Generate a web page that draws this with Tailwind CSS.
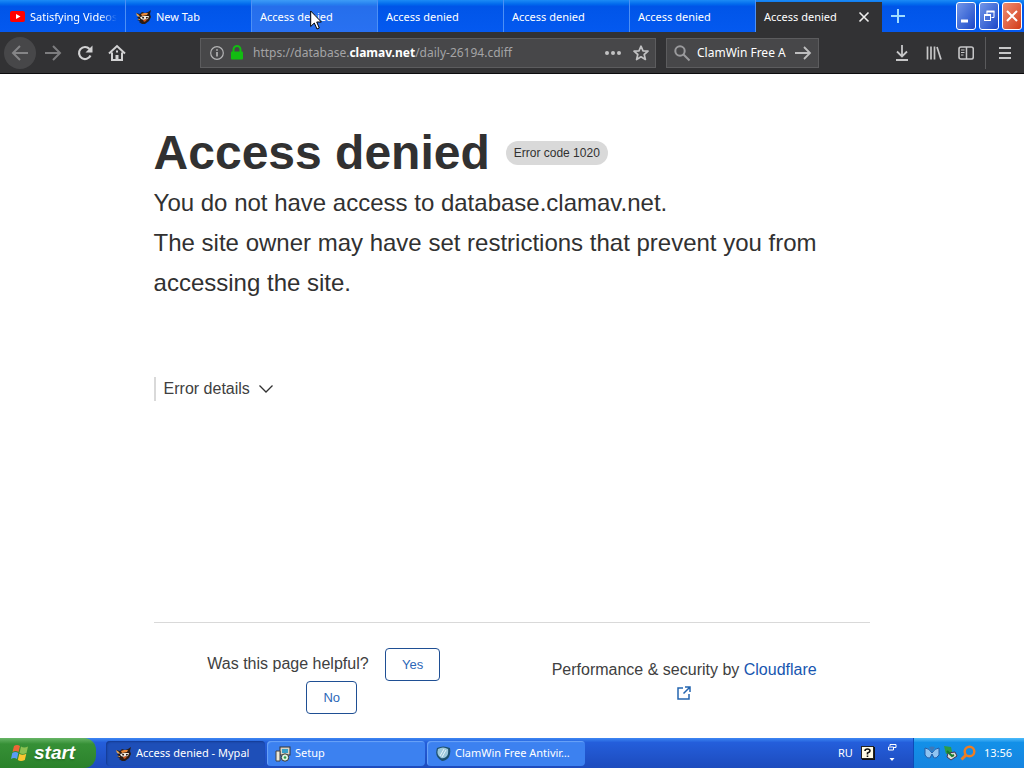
<!DOCTYPE html>
<html lang="en">
<head>
<meta charset="utf-8">
<meta name="viewport" content="width=device-width, initial-scale=1">
<title>Access denied - Mypal</title>
<script src="https://cdn.jsdelivr.net/npm/@tailwindcss/browser@4"></script>
</head>
<body class="flex h-screen flex-col overflow-hidden bg-white font-['Liberation_Sans',Arial,sans-serif] text-[#313131]">
<svg class="hidden">
  <symbol id="fox" viewBox="0 0 16 16">
    <path d="M0 4l4 1 2-2 3 1 3-1 3-2-1 4 1 3-2 4-4 3H6l-3-2 1-1-3-1 2-1-2-2 2 0z" fill="#2b1d16"/>
    <path d="M5 5l3-1 4 0-1 2-5 1z" fill="#e98a3a"/>
    <path d="M4 8l4-1 5 0-1 3-4 1-3-1z" fill="#efe9df"/>
    <path d="M6 8l2 0 0 1.500-1.500 0zM10 8h2l-.500 1.500h-1.500z" fill="#2b1d16"/>
    <path d="M7 11l4-1-1 2-2 1z" fill="#c9551d"/>
    <path d="M0 4l3 2 1 2-3-1zM1 10l3 0 0 1z" fill="#e5a556"/>
  </symbol>
</svg>

<!-- Tab strip -->
<header class="flex h-8 shrink-0 bg-linear-to-b from-[#1c8bf5] via-[#0055e8] via-20% to-[#0459f0] font-['Noto_Sans','Open_Sans',sans-serif] text-[11px] text-white">
  <nav class="grid min-w-0 flex-1 grid-cols-7" aria-label="Tabs">
    <a href="#" class="flex min-w-0 items-center gap-1 border-r border-[#4d90f5] pt-0.5 pr-2 pl-2.5">
      <svg class="h-4 w-4 shrink-0" viewBox="0 0 16 16"><rect y="2" width="15" height="11" rx="2" fill="#f00"/><path d="M6 5l4.500 2.500L6 10z" fill="#fff"/></svg>
      <span class="mask-r-from-80% whitespace-nowrap">Satisfying Videos</span>
    </a>
    <a href="#" class="flex items-center gap-1 border-r border-[#4d90f5] pt-0.5 pl-2.5"><svg class="h-4 w-4"><use href="#fox"/></svg>New Tab</a>
    <a href="#" class="flex items-center border-r border-[#4d90f5] bg-white/15 pt-0.5 pl-2">Access denied</a>
    <a href="#" class="flex items-center border-r border-[#4d90f5] pt-0.5 pl-2">Access denied</a>
    <a href="#" class="flex items-center border-r border-[#4d90f5] pt-0.5 pl-2">Access denied</a>
    <a href="#" class="flex items-center border-r border-[#4d90f5] pt-0.5 pl-2">Access denied</a>
    <div class="mt-0.5 flex items-center justify-between bg-[#323234] pr-3 pl-2">
      <a href="#" aria-current="page">Access denied</a>
      <button aria-label="Close tab"><svg class="h-3 w-3" viewBox="0 0 12 12" stroke="#eee" stroke-width="1.600"><path d="M1.500 1.500l9 9M10.500 1.500l-9 9"/></svg></button>
    </div>
  </nav>
  <div class="flex w-[142px] items-center pl-2">
    <button aria-label="New tab" class="mr-auto"><svg class="h-4 w-4" viewBox="0 0 16 16" stroke="#9fdcff" stroke-width="2"><path d="M8 1v14M1 8h14"/></svg></button>
    <div class="flex gap-[3px] pr-0.5">
      <button aria-label="Minimize" class="h-7 w-5 rounded-[3px] border border-white bg-linear-to-br from-[#7396e8] to-[#1c45c8]"><svg viewBox="0 0 18 26"><path d="M4 18h7" stroke="#fff" stroke-width="3"/></svg></button>
      <button aria-label="Restore" class="h-7 w-5 rounded-[3px] border border-white bg-linear-to-br from-[#7396e8] to-[#1c45c8]"><svg viewBox="0 0 18 26" fill="none" stroke="#fff"><path d="M7 11V8.500h7v6h-2.500"/><path d="M6.500 8.500h8" stroke-width="2"/><rect x="4.500" y="11.500" width="6" height="6"/><path d="M4 12h7" stroke-width="2"/></svg></button>
      <button aria-label="Close" class="h-7 w-5 rounded-[3px] border border-white bg-linear-to-br from-[#ee8b70] to-[#d23a12]"><svg viewBox="0 0 18 26" stroke="#fff" stroke-width="2"><path d="M4 8l10 10M14 8L4 18"/></svg></button>
    </div>
  </div>
</header>

<!-- Navigation toolbar -->
<div class="flex h-[42px] shrink-0 items-center border-b border-[#0c0c0d] bg-[#323234] pr-[11px] pl-1 font-['Noto_Sans','Open_Sans',sans-serif] text-[12px] text-white">
  <button aria-label="Back" class="flex h-8 w-8 items-center justify-center rounded-full bg-[#474749]"><svg class="h-[18px] w-[18px]" viewBox="0 0 18 18" fill="none" stroke="#858587" stroke-width="2"><path d="M17 9H2M9 2L2 9l7 7"/></svg></button>
  <button aria-label="Forward" class="ml-2"><svg class="h-[18px] w-[18px]" viewBox="0 0 18 18" fill="none" stroke="#7d7d7f" stroke-width="2"><path d="M1 9h15M9 2l7 7-7 7"/></svg></button>
  <button aria-label="Reload" class="ml-3.5"><svg class="h-[18px] w-[18px]" viewBox="0 0 18 18" fill="none" stroke="#d2d2d3" stroke-width="2.200"><path d="M14.500 11.500A6 6 0 1 1 13.500 5"/><path d="M16.500 1.500v7h-7z" fill="#d2d2d3" stroke="none"/></svg></button>
  <button aria-label="Home" class="ml-3.5"><svg class="h-[18px] w-[18px]" viewBox="0 0 18 18" fill="none" stroke="#d2d2d3" stroke-width="2"><path d="M1 9.500L9 2l8 7.500M4 8.500V16h10V8.500"/><path d="M9 16v-5" stroke-width="3"/><path d="M8 7.500h2"/></svg></button>
  <div class="ml-[74px] flex h-[30px] min-w-0 flex-1 items-center border border-[#5c5c5e] bg-[#474749] pr-1.5 pl-[9px]">
    <svg class="h-3.5 w-3.5 shrink-0" viewBox="0 0 14 14" fill="none" stroke="#b4b4b5"><circle cx="7" cy="7" r="6.300" stroke-width="1.200"/><path d="M7 6v4.500M7 3.200v1.600" stroke-width="1.700"/></svg>
    <svg class="ml-1.5 h-[15px] w-3.5 shrink-0" viewBox="0 0 14 15"><path d="M3.500 7V4.500a3.500 3.500 0 0 1 7 0V7" fill="none" stroke="#12bc12" stroke-width="2"/><rect x="1" y="6.500" width="12" height="8" rx="1" fill="#12bc12"/></svg>
    <div class="ml-[9px] min-w-0 flex-1 whitespace-nowrap text-[#a4a4a6]" role="textbox" aria-label="Address">https://database.<b class="font-bold text-white">clamav.net</b>/daily-26194.cdiff</div>
    <button aria-label="Page actions"><svg class="h-4 w-4" viewBox="0 0 16 16" fill="#c2c2c3"><circle cx="2" cy="8" r="2"/><circle cx="8" cy="8" r="2"/><circle cx="14" cy="8" r="2"/></svg></button>
    <button aria-label="Bookmark" class="ml-3"><svg class="h-4 w-4" viewBox="0 0 16 16" fill="none" stroke="#c2c2c3" stroke-width="1.700" stroke-linejoin="round"><path d="M8 1.200l2 4.600 5 .4-3.800 3.300 1.200 5L8 11.800l-4.400 2.700 1.200-5L1 6.200l5-.4z"/></svg></button>
  </div>
  <form class="ml-2.5 flex h-[30px] w-[153px] items-center border border-[#5c5c5e] bg-[#474749] px-1.5">
    <svg class="h-[18px] w-[18px] shrink-0" viewBox="0 0 18 18" fill="none" stroke="#9b9b9d" stroke-width="2"><circle cx="7" cy="7" r="4.700"/><path d="M10.500 10.500l6 6"/></svg>
    <input aria-label="Search" value="ClamWin Free A" class="ml-1.5 w-0 flex-1 bg-transparent outline-none">
    <button aria-label="Go" class="ml-1.5"><svg class="h-[18px] w-[18px]" viewBox="0 0 18 18" fill="none" stroke="#bebebf" stroke-width="1.800"><path d="M1 9h15M10 3l6 6-6 6"/></svg></button>
  </form>
  <div class="ml-[75px] flex items-center gap-4">
    <button aria-label="Downloads"><svg class="h-4 w-4" viewBox="0 0 16 16" fill="none" stroke="#c6c6c7" stroke-width="1.800"><path d="M8 0v11M3 6.500l5 5 5-5M2 15h12"/></svg></button>
    <button aria-label="Library"><svg class="h-4 w-4" viewBox="0 0 16 16" stroke="#c6c6c7" stroke-width="1.700"><path d="M1.500 1.500v13M5 1.500v13M8.500 1.500v13M11 2l4 12.500"/></svg></button>
    <button aria-label="Sidebar"><svg class="h-4 w-4" viewBox="0 0 16 16" fill="none" stroke="#c6c6c7"><rect x="1" y="2" width="14.300" height="12" rx="2" stroke-width="1.600"/><path d="M8.500 2v12" stroke-width="1.500"/><path d="M3 5h3.500M3 7.500h3.500M3 10h2.500"/></svg></button>
  </div>
  <div class="mr-[11px] ml-[11px] h-8 w-px bg-[#5a5a5c]"></div>
  <button aria-label="Menu"><svg class="h-4 w-4" viewBox="0 0 16 16" stroke="#c6c6c7" stroke-width="1.800"><path d="M2 3h12M2 8h12M2 13h12"/></svg></button>
</div>

<!-- Error page -->
<main class="mx-auto flex w-[70%] min-h-0 flex-1 flex-col pt-[50px]">
  <div class="flex items-center gap-4">
    <h1 class="text-[48px] leading-[58px] font-bold">Access denied</h1>
    <span class="rounded-full bg-[#d9d9d9] px-2 text-[12px] leading-6">Error code 1020</span>
  </div>
  <p class="mt-px text-[24px] leading-10">You do not have access to database.clamav.net.</p>
  <p class="text-[24px] leading-10">The site owner may have set restrictions that prevent you from accessing the site.</p>
  <button class="mt-[74px] flex h-6 items-center gap-2 self-start border-l-2 border-[#d9d9d9] pl-2 text-[16px] text-[#404040]">Error details
    <svg class="h-4 w-4" viewBox="0 0 16 16" fill="none" stroke="#313131" stroke-width="1.300"><path d="M1.500 4.500L8 11l6.500-6.500"/></svg>
  </button>
  <footer class="mt-auto mb-6 flex border-t border-[#d9d9d9] pt-[25px] pr-3 text-center text-[16px] text-[#404040]">
    <div class="w-1/2 pr-12 pl-9">Was this page helpful?
      <button class="ml-3 h-[33px] rounded border border-[#1f4f94] px-4 text-[13px] text-[#2c67b8]">Yes</button>
      <button class="ml-4 h-[33px] rounded border border-[#1f4f94] px-4 text-[13px] text-[#2c67b8]">No</button>
    </div>
    <div class="w-1/2 pt-2.5 pr-9 pl-10 leading-6">Performance &amp; security by <a href="#" class="text-[#1756b0]">Cloudflare
      <svg class="inline h-4 w-4 align-text-bottom" viewBox="0 0 16 16" fill="none" stroke="#2465b0" stroke-width="1.500"><path d="M7 2H2v11h11V8M9 1h5v5M14 1L7.500 7.500"/></svg></a>
    </div>
  </footer>
</main>

<!-- Taskbar -->
<div class="flex h-[30px] shrink-0 items-stretch bg-linear-to-b from-[#3d86f3] via-[#245edb] via-15% to-[#1d4bbd] font-['Noto_Sans','Open_Sans',sans-serif] text-[11px] text-white">
  <button class="mr-2.5 flex w-24 items-center gap-1 rounded-r-xl bg-linear-to-b from-[#66b566] via-[#369036] via-20% to-[#2b822b] pl-2.5 font-['Liberation_Sans',Arial,sans-serif] text-[19px] font-bold italic text-shadow-sm">
    <svg class="h-[18px] w-5" viewBox="0 0 20 18"><path d="M4 2q3-2 6 0L8.500 8q-3-2-6 0z" fill="#ee6637"/><path d="M11 2.500q3 2 7 0L16.500 9q-4 2-7 0z" fill="#8cc152"/><path d="M2.300 9q3-2 6 0L7 15q-3-2-6 0z" fill="#5b9cf5"/><path d="M9.300 9.800q3 2 7 0L14.800 16q-4 2-7 0z" fill="#fbc531"/></svg>start
  </button>
  <button class="my-[3px] mb-0.5 flex w-[159px] items-center gap-1 rounded-sm bg-[#1e4fb8] pl-2.5 shadow-[inset_1px_1px_2px_#143a91]"><svg class="h-4 w-4"><use href="#fox"/></svg>Access denied - Mypal</button>
  <button class="my-[3px] mb-0.5 ml-0.5 flex w-[158px] items-center gap-1 rounded-sm bg-[#3c81f0] pl-2 shadow-[inset_1px_1px_1px_#6ba4f8]">
    <svg class="h-4 w-4" viewBox="0 0 16 16"><rect x="5" y="1" width="10" height="8" fill="#d8d4c8" stroke="#333"/><rect x="7" y="3" width="6" height="4" fill="#38a0c8"/><path d="M1 5h4v10H1z" fill="#ece9d8" stroke="#444"/><circle cx="10" cy="11.500" r="3.700" fill="#dff3df" stroke="#333"/><circle cx="10" cy="11.500" r="1.300" fill="#2d9a4c"/></svg>Setup
  </button>
  <button class="my-[3px] mb-0.5 ml-0.5 flex w-[158px] items-center gap-1 rounded-sm bg-[#3c81f0] pl-2 shadow-[inset_1px_1px_1px_#6ba4f8]">
    <svg class="h-4 w-4" viewBox="0 0 16 16"><path d="M2 2Q8-1 15 2q1 5-1 9-3 4-7 4Q-1 11 2 2z" fill="#1d5170"/><path d="M3 3Q8 0 13 3q1 5-2 8-3 2-5 1Q1 9 3 3z" fill="#9cc8dc"/><path d="M5 10L9 3M7 11l4-7" stroke="#e8f5fa"/></svg>ClamWin Free Antivir…
  </button>
  <div class="ml-auto flex items-center pr-4">
    <span>RU</span>
    <svg class="ml-2 h-3.5 w-3.5" viewBox="0 0 14 14"><rect x="1" y="1" width="13" height="13" fill="#111"/><rect x=".5" y=".5" width="12" height="12" fill="#fffbe6" stroke="#222"/><path d="M4 5q0-2 2.500-2T9 5Q9 6 6.500 7v1.500M6.500 9.500v1.500" fill="none" stroke="#111" stroke-width="1.600"/></svg>
    <svg class="ml-3 h-5 w-2.5" viewBox="0 0 10 20" fill="none" stroke="#fff"><path d="M3 3V1.500h6v3H7M1.500 4h5v3h-5z"/><path d="M2.500 15h5L5 18z" fill="#fff" stroke="none"/></svg>
  </div>
  <div class="flex items-center gap-0.5 border-l border-[#0d4bb8] bg-linear-to-b from-[#4bbcfb] via-[#1290e8] via-15% to-[#1684e0] pr-3 pl-2.5">
    <svg class="h-4 w-4" viewBox="0 0 16 16"><path d="M1 3q4 0 7 5 3-5 7-5v7q-3 4-5 3L8 9l-2 4q-3 1-5-3z" fill="#8fc4f2" stroke="#245da5"/><path d="M5 2q3-1 6 0L8 7z" fill="#3e78b8"/></svg>
    <svg class="h-4 w-4" viewBox="0 0 16 16"><path d="M2 1l7 1 1 5-6 2z" fill="#2d9c46"/><path d="M6 8l7-1 2 4-6 4-4-3z" fill="#d9dfd9" stroke="#435"/><path d="M5 6l5 5 2-1" fill="none" stroke="#197a2c" stroke-width="2"/></svg>
    <svg class="h-4 w-4" viewBox="0 0 16 16" fill="none" stroke="#ee7d22"><circle cx="9.500" cy="6.500" r="4.800" stroke-width="2.500"/><path d="M6 10l-4.500 4.500" stroke-width="3"/></svg>
    <time class="ml-1.5">13:56</time>
  </div>
</div>

<!-- Mouse pointer -->
<svg class="pointer-events-none absolute top-2.5 left-[310px] h-5 w-3" viewBox="0 0 12 20"><path d="M.700 1v15.500l3.600-3.500 2.700 6 2.300-1-2.600-6h4.700z" fill="#fff" stroke="#000"/></svg>
</body>
</html>
